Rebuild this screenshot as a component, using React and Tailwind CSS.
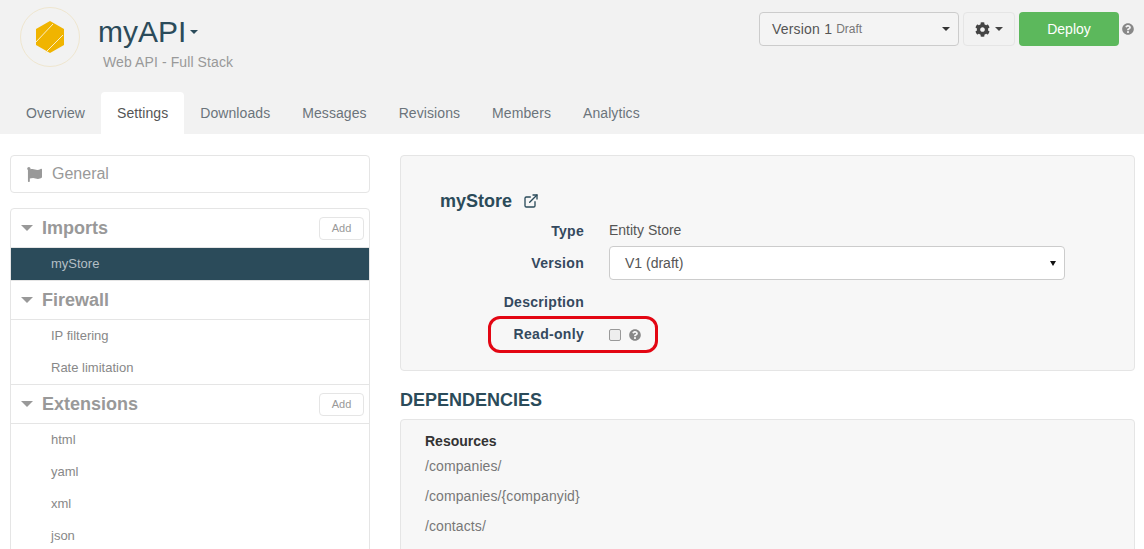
import React from 'react';
import { FaCog, FaFlag, FaQuestionCircle } from 'react-icons/fa';
import { ExternalLink } from 'lucide-react';

const tabs = ['Overview', 'Settings', 'Downloads', 'Messages', 'Revisions', 'Members', 'Analytics'];

// Triangulo usado nos dropdowns (tamanho vem por className)
const Caret = ({ className = '' }) => (
  <span className={`inline-block w-0 h-0 border-x-transparent ${className}`} />
);

const Logo = () => (
  <div className="w-[60px] h-[60px] rounded-full border border-[#efe6cf] flex items-center justify-center">
    <svg width="28" height="32" viewBox="0 0 28 32">
      <polygon points="14,0 28,8 28,24 14,32 0,24 0,8" fill="#f0b400" />
      <path d="M0 21 L17 3 M9 32 L27 14" stroke="#fbeec8" strokeWidth="1" />
    </svg>
  </div>
);

const SectionHeader = ({ title, add }) => (
  <div className="h-[39px] flex items-center border-b border-[#e5e5e5] pl-[10px] pr-[5px]">
    <Caret className="border-x-[6px] border-t-[6px] border-t-[#999] mr-[9px]" />
    <span className="text-[18px] font-bold text-[#999]">{title}</span>
    {add && (
      <button className="ml-auto w-[45px] h-[23px] border border-[#e5e5e5] rounded-[4px] text-[11px] text-[#999] bg-white">
        Add
      </button>
    )}
  </div>
);

const SideItem = ({ label, active }) => (
  <div className={`h-8 flex items-center pl-10 text-[13px] ${active ? 'bg-[#2b4b5a] text-[#b4bfc5]' : 'text-[#888]'}`}>
    {label}
  </div>
);

const Field = ({ label, children }) => (
  <div className="flex items-center">
    <div className="w-[144px] text-right text-[14px] font-bold text-[#34495e] tracking-[0.3px]">{label}</div>
    <div className="ml-[25px] flex items-center">{children}</div>
  </div>
);

export default function App() {
  return (
    <div className="w-[1144px] h-[549px] overflow-hidden bg-white font-['Liberation_Sans',Arial,sans-serif]">
      <header className="h-[134px] bg-[#f2f2f2] flex flex-col">
        <div className="h-[92px] flex items-start pl-5 pr-[10px]">
          <div className="mt-[7px]"><Logo /></div>
          <div className="ml-[18px] mt-[13px]">
            <div className="flex items-center h-[38px]">
              <span className="text-[30px] leading-none text-[#2b4b5a]">myAPI</span>
              <Caret className="ml-[4px] border-x-[4px] border-t-[4px] border-t-[#2b4b5a]" />
            </div>
            <div className="ml-[5px] mt-px text-[14px] text-[#999] tracking-[0.1px]">Web API - Full Stack</div>
          </div>
          <div className="ml-auto mt-3 flex items-center">
            <button className="w-[200px] h-[34px] border border-[#ccc] rounded-[4px] bg-[#f4f4f4] flex items-center pl-[12px] pr-[8px] text-[#555]">
              <span className="text-[14px] tracking-[0.2px]">Version 1</span>
              <span className="ml-[4px] text-[12px] text-[#777]">Draft</span>
              <Caret className="ml-auto border-x-[4px] border-t-[4px] border-t-[#333]" />
            </button>
            <button className="ml-[4px] w-[52px] h-[34px] border border-[#e5e5e5] rounded-[4px] flex items-center justify-center gap-[5px] text-[#444]">
              <FaCog size={15} />
              <Caret className="border-x-[4px] border-t-[4px] border-t-[#444]" />
            </button>
            <button className="ml-[4px] w-[100px] h-[34px] rounded-[4px] bg-[#5cb85c] text-white text-[14px]">Deploy</button>
            <FaQuestionCircle size={12} className="ml-[3px] text-[#888]" />
          </div>
        </div>
        <nav className="h-[42px] flex pl-[10px] tracking-[0.08px]">
          {tabs.map((t) => (
            <div
              key={t}
              className={`px-4 flex items-center text-[14px] rounded-t-[4px] ${t === 'Settings' ? 'bg-white text-[#555]' : 'text-[#6b747b]'}`}
            >
              {t}
            </div>
          ))}
        </nav>
      </header>

      <main className="flex pl-[10px] pt-[21px]">
        <aside className="w-[360px] shrink-0">
          <div className="h-[38px] border border-[#e5e5e5] rounded-[4px] flex items-center pl-4 text-[16px] text-[#999]">
            <FaFlag size={15} className="mr-[10px]" />
            General
          </div>
          <div className="mt-[15px] border border-[#e5e5e5] rounded-[4px]">
            <SectionHeader title="Imports" add />
            <SideItem label="myStore" active />
            <div className="border-t border-[#e5e5e5]" />
            <SectionHeader title="Firewall" />
            <SideItem label="IP filtering" />
            <SideItem label="Rate limitation" />
            <div className="border-t border-[#e5e5e5]" />
            <SectionHeader title="Extensions" add />
            <SideItem label="html" />
            <SideItem label="yaml" />
            <SideItem label="xml" />
            <SideItem label="json" />
          </div>
        </aside>

        <section className="ml-[30px] w-[735px] shrink-0">
          <div className="relative h-[216px] bg-[#f7f7f7] border border-[#e5e5e5] rounded-[4px] pl-[39px] pt-[35px]">
            <div className="flex items-center h-[20px]">
              <span className="text-[18px] font-bold text-[#2b4b5a]">myStore</span>
              <ExternalLink size={16} strokeWidth={2} className="ml-[11px] text-[#2b4b5a]" />
            </div>
            <div className="mt-[10px] h-[20px]">
              <Field label="Type"><span className="-mt-[2px] text-[14px] text-[#555]">Entity Store</span></Field>
            </div>
            <div className="mt-[5px]">
              <Field label="Version">
                <div className="w-[456px] h-[34px] bg-white border border-[#ccc] rounded-[4px] flex items-center pl-[15px] pr-[8px] text-[14px] text-[#555]">
                  V1 (draft)
                  <Caret className="ml-auto border-x-[3px] border-t-[5px] border-t-[#111]" />
                </div>
              </Field>
            </div>
            <div className="mt-[12px] h-[20px]">
              <Field label="Description" />
            </div>
            <div className="mt-[12px] h-[20px]">
              <Field label="Read-only">
                <span className="w-3 h-3 rounded-[2px] border border-[#999] bg-[#eee]" />
                <FaQuestionCircle size={12} className="ml-2 text-[#888]" />
              </Field>
            </div>
            {/* Destaque vermelho por cima do campo */}
            <div className="absolute left-[87px] top-[160px] w-[170px] h-[37px] border-[3px] border-[#e30613] rounded-[12px]" />
          </div>

          <h2 className="mt-[19px] text-[18px] leading-[20px] font-bold text-[#2b4b5a]">DEPENDENCIES</h2>
          <div className="mt-[9px] h-[200px] bg-[#f7f7f7] border border-[#e5e5e5] rounded-[4px] pl-6 pt-[13px]">
            <div className="text-[14px] leading-[16px] font-bold text-[#333]">Resources</div>
            <div className="mt-[9px] flex flex-col gap-[14px] text-[14px] leading-[16px] text-[#777] tracking-[0.1px]">
              <div>/companies/</div>
              <div>/companies/{'{companyid}'}</div>
              <div>/contacts/</div>
            </div>
          </div>
        </section>
      </main>
    </div>
  );
}
